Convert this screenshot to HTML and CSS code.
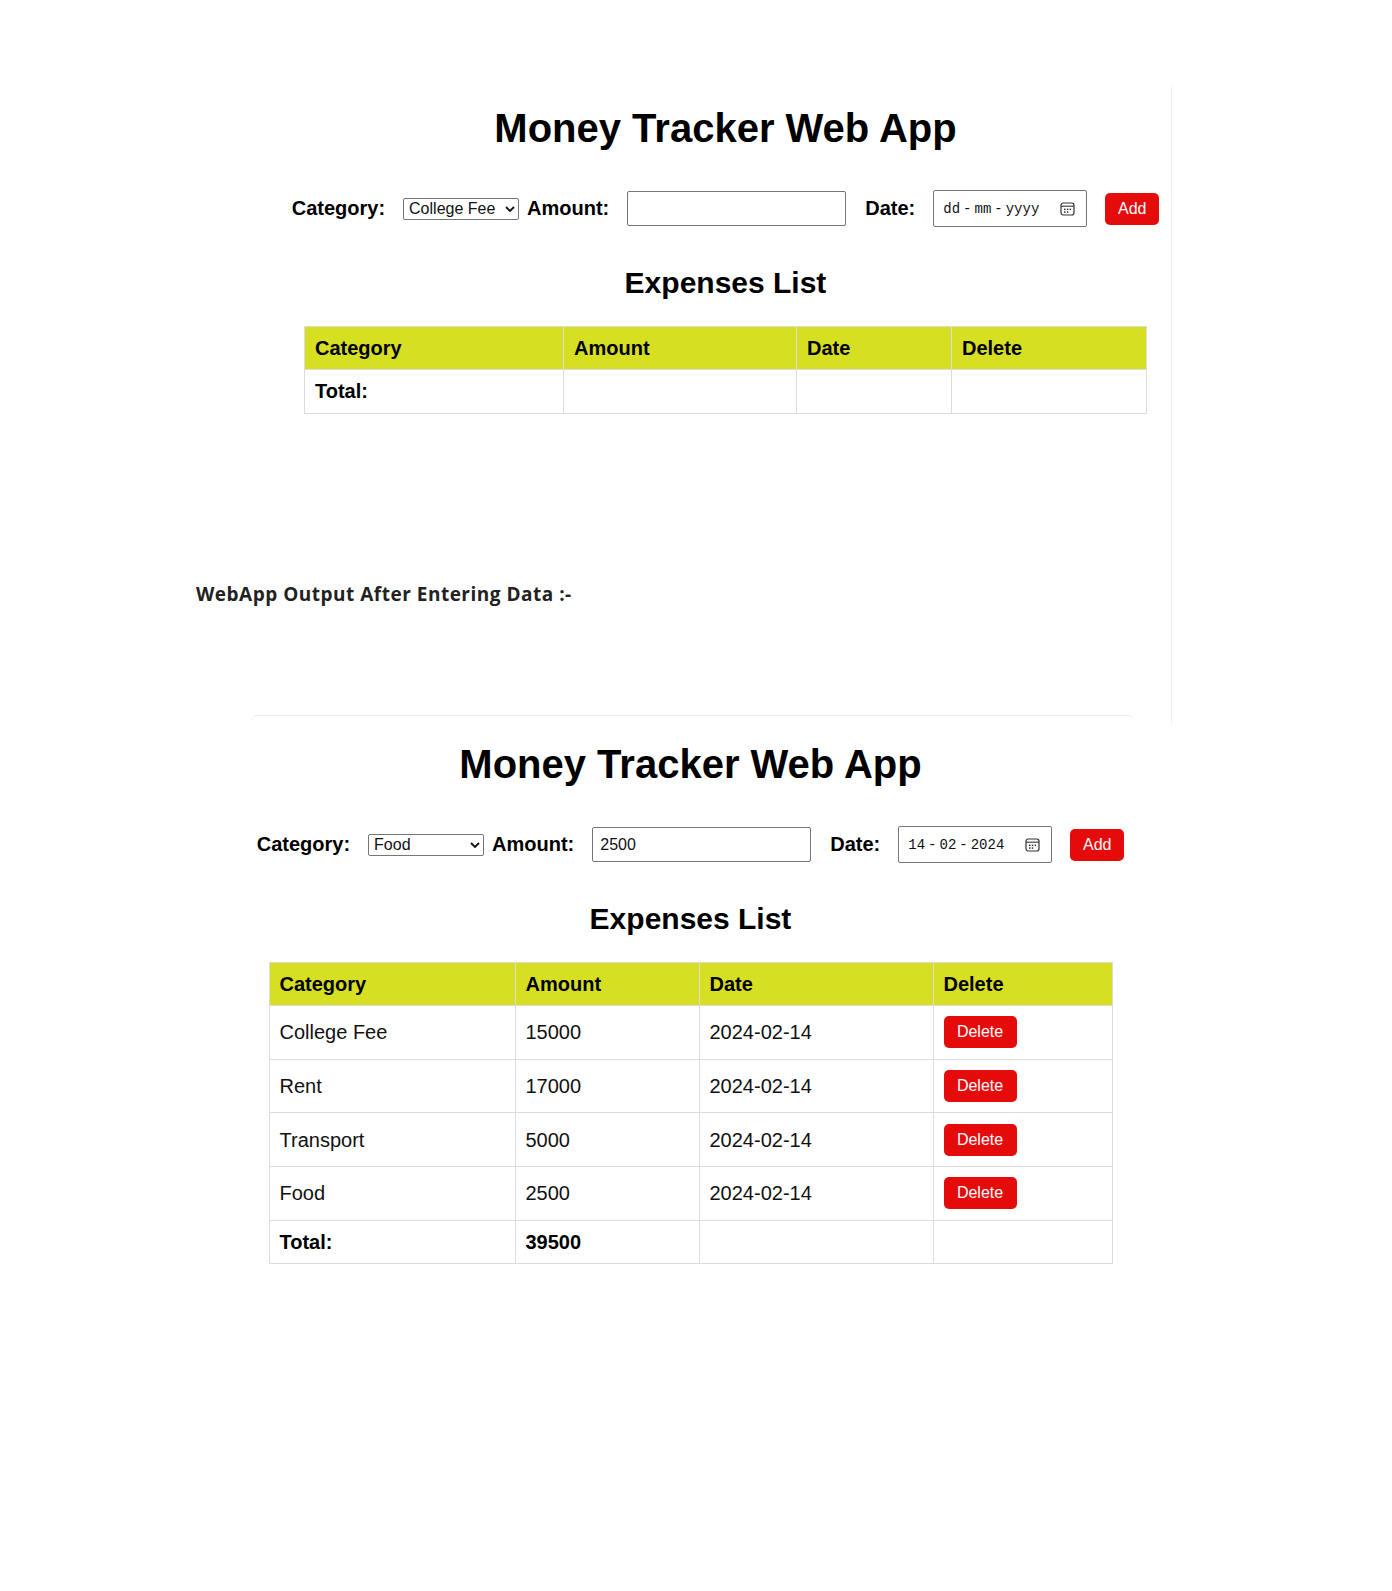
FILE: index.html
```html
<!DOCTYPE html>
<html lang="en">
<head>
<meta charset="utf-8">
<title>Money Tracker Web App</title>
<link rel="stylesheet" href="styles.css">
</head>
<body>
<div class="page">
  <div class="doc">
    <div class="app app1">
      <h1 class="title">Money Tracker Web App</h1>
      <div class="form">
        <label class="lbl">Category:</label>
        <div class="sel"><span class="sel-text">College Fee</span><svg class="chev" width="10" height="6" viewBox="0 0 10 6"><path d="M1 1 L5 5 L9 1" fill="none" stroke="#111" stroke-width="1.8"/></svg></div>
        <label class="lbl">Amount:</label>
        <div class="inp"></div>
        <label class="lbl">Date:</label>
        <div class="date"><span class="date-text ph">dd<i>-</i>mm<i>-</i>yyyy</span><svg class="cal" width="15" height="14" viewBox="0 0 15 14"><rect x="1" y="1" width="13" height="12" rx="2.2" fill="none" stroke="#333" stroke-width="1.2"/><line x1="1" y1="4.2" x2="14" y2="4.2" stroke="#333" stroke-width="1.1"/><g fill="#333"><rect x="4" y="6.6" width="1.5" height="1.5"/><rect x="6.8" y="6.6" width="1.5" height="1.5"/><rect x="9.6" y="6.6" width="1.5" height="1.5"/><rect x="4" y="9.3" width="1.5" height="1.5"/><rect x="6.8" y="9.3" width="1.5" height="1.5"/></g></svg></div>
        <button class="btn add">Add</button>
      </div>
      <h2 class="sub">Expenses List</h2>
      <table class="tbl t1">
        <colgroup><col class="a"><col class="b"><col class="c"><col class="d"></colgroup>
        <thead>
          <tr><th>Category</th><th>Amount</th><th>Date</th><th>Delete</th></tr>
        </thead>
        <tbody>
          <tr class="total"><td>Total:</td><td></td><td></td><td></td></tr>
        </tbody>
      </table>
    </div>
    <p class="caption">WebApp Output After Entering Data :-</p>
  </div>

  <div class="shot2">
    <div class="app app2">
      <h1 class="title">Money Tracker Web App</h1>
      <div class="form">
        <label class="lbl">Category:</label>
        <div class="sel"><span class="sel-text">Food</span><svg class="chev" width="10" height="6" viewBox="0 0 10 6"><path d="M1 1 L5 5 L9 1" fill="none" stroke="#111" stroke-width="1.8"/></svg></div>
        <label class="lbl">Amount:</label>
        <div class="inp"><span class="inp-text">2500</span></div>
        <label class="lbl">Date:</label>
        <div class="date"><span class="date-text">14<i>-</i>02<i>-</i>2024</span><svg class="cal" width="15" height="14" viewBox="0 0 15 14"><rect x="1" y="1" width="13" height="12" rx="2.2" fill="none" stroke="#333" stroke-width="1.2"/><line x1="1" y1="4.2" x2="14" y2="4.2" stroke="#333" stroke-width="1.1"/><g fill="#333"><rect x="4" y="6.6" width="1.5" height="1.5"/><rect x="6.8" y="6.6" width="1.5" height="1.5"/><rect x="9.6" y="6.6" width="1.5" height="1.5"/><rect x="4" y="9.3" width="1.5" height="1.5"/><rect x="6.8" y="9.3" width="1.5" height="1.5"/></g></svg></div>
        <button class="btn add">Add</button>
      </div>
      <h2 class="sub">Expenses List</h2>
      <table class="tbl t2">
        <colgroup><col class="a"><col class="b"><col class="c"><col class="d"></colgroup>
        <thead>
          <tr><th>Category</th><th>Amount</th><th>Date</th><th>Delete</th></tr>
        </thead>
        <tbody>
          <tr class="data"><td>College Fee</td><td>15000</td><td>2024-02-14</td><td><button class="btn del">Delete</button></td></tr>
          <tr class="data"><td>Rent</td><td>17000</td><td>2024-02-14</td><td><button class="btn del">Delete</button></td></tr>
          <tr class="data"><td>Transport</td><td>5000</td><td>2024-02-14</td><td><button class="btn del">Delete</button></td></tr>
          <tr class="data"><td>Food</td><td>2500</td><td>2024-02-14</td><td><button class="btn del">Delete</button></td></tr>
          <tr class="total"><td>Total:</td><td>39500</td><td></td><td></td></tr>
        </tbody>
      </table>
    </div>
  </div>
</div>
</body>
</html>
```
FILE: styles.css
```css
* { box-sizing: border-box; }

html, body {
  margin: 0;
  background: #ffffff;
}

body {
  font-family: "Liberation Sans", Arial, sans-serif;
  color: #000;
}

.page {
  padding-top: 86px;
  min-height: 1591px;
}

.doc {
  width: 1172px;
  height: 639px;
  border-right: 1px solid #f1f1f1;
}

.app1 {
  margin-left: 279px;
  width: 893px;
  padding-top: 19px;
}

.shot2 {
  margin-top: -10px;
  margin-left: 251px;
  width: 883px;
  border-top: 1px solid #ececec;
  border-radius: 6px 6px 0 0;
}

.app2 {
  padding-top: 25px;
  padding-right: 4px;
}

.title {
  margin: 0;
  font-size: 40px;
  line-height: 46px;
  font-weight: 700;
  text-align: center;
}

.form {
  display: flex;
  align-items: center;
  justify-content: center;
  height: 37px;
  margin-top: 39px;
}

.lbl {
  font-size: 20px;
  font-weight: 700;
  margin-right: 18px;
  line-height: 23px;
}

.sel {
  width: 116px;
  height: 22px;
  border: 1px solid #767676;
  border-radius: 2px;
  display: flex;
  align-items: center;
  padding: 0 3px 0 5px;
  margin-right: 8px;
  font-size: 16px;
  color: #111;
}

.sel-text {
  flex: 1;
  white-space: nowrap;
}

.chev {
  display: block;
  flex: none;
}

.inp {
  width: 219px;
  height: 35px;
  border: 1px solid #767676;
  border-radius: 2px;
  margin-right: 19px;
  display: flex;
  align-items: center;
  padding-left: 7px;
  font-size: 16px;
  color: #111;
}

.date {
  width: 154px;
  height: 37px;
  border: 1px solid #767676;
  border-radius: 2px;
  margin-right: 18px;
  display: flex;
  align-items: center;
  padding: 0 11px 0 9px;
}

.date-text {
  flex: 1;
  font-family: "Liberation Mono", "DejaVu Sans Mono", monospace;
  font-size: 14px;
  color: #111;
  white-space: nowrap;
}

.date-text i {
  font-style: normal;
  margin: 0 3px;
}

.cal {
  display: block;
  flex: none;
}

.btn {
  font-family: "Liberation Sans", Arial, sans-serif;
  font-size: 16px;
  color: #fff;
  background: #e60b0b;
  border: 0;
  border-radius: 5px;
  height: 32px;
  padding: 0 13px;
  line-height: 32px;
  display: block;
}

.add {
  width: 54px;
  padding: 0;
  text-align: center;
}

.del {
  width: 73px;
  padding: 0;
  text-align: center;
}

.sub {
  margin: 39px 0 0;
  font-size: 30px;
  line-height: 34px;
  font-weight: 700;
  text-align: center;
}

.tbl {
  margin: 26px auto 0;
  border-collapse: collapse;
  table-layout: fixed;
}

.t1 { width: 842px; }
.t1 col.a { width: 259px; }
.t1 col.b { width: 233px; }
.t1 col.c { width: 155px; }
.t1 col.d { width: 195px; }

.t2 { width: 843px; }
.t2 col.a { width: 246px; }
.t2 col.b { width: 184px; }
.t2 col.c { width: 234px; }
.t2 col.d { width: 179px; }

.tbl th,
.tbl td {
  border: 1px solid #dcdcdc;
  padding: 10px;
  text-align: left;
  font-size: 20px;
  line-height: 22px;
  vertical-align: middle;
}

.tbl th {
  background: #d7df23;
  font-weight: 700;
  color: #000;
}

.tbl td {
  color: #111;
}

.data td {
  padding-top: 10.35px;
  padding-bottom: 10.35px;
}

.total td {
  font-weight: 700;
  color: #000;
  padding-top: 10.3px;
  padding-bottom: 10.3px;
}

.caption {
  margin: 168px 0 0 196px;
  font-family: "Open Sans", Lato, sans-serif;
  font-weight: 700;
  font-size: 19px;
  line-height: 24px;
  letter-spacing: 0.5px;
  color: #222;
}
```
